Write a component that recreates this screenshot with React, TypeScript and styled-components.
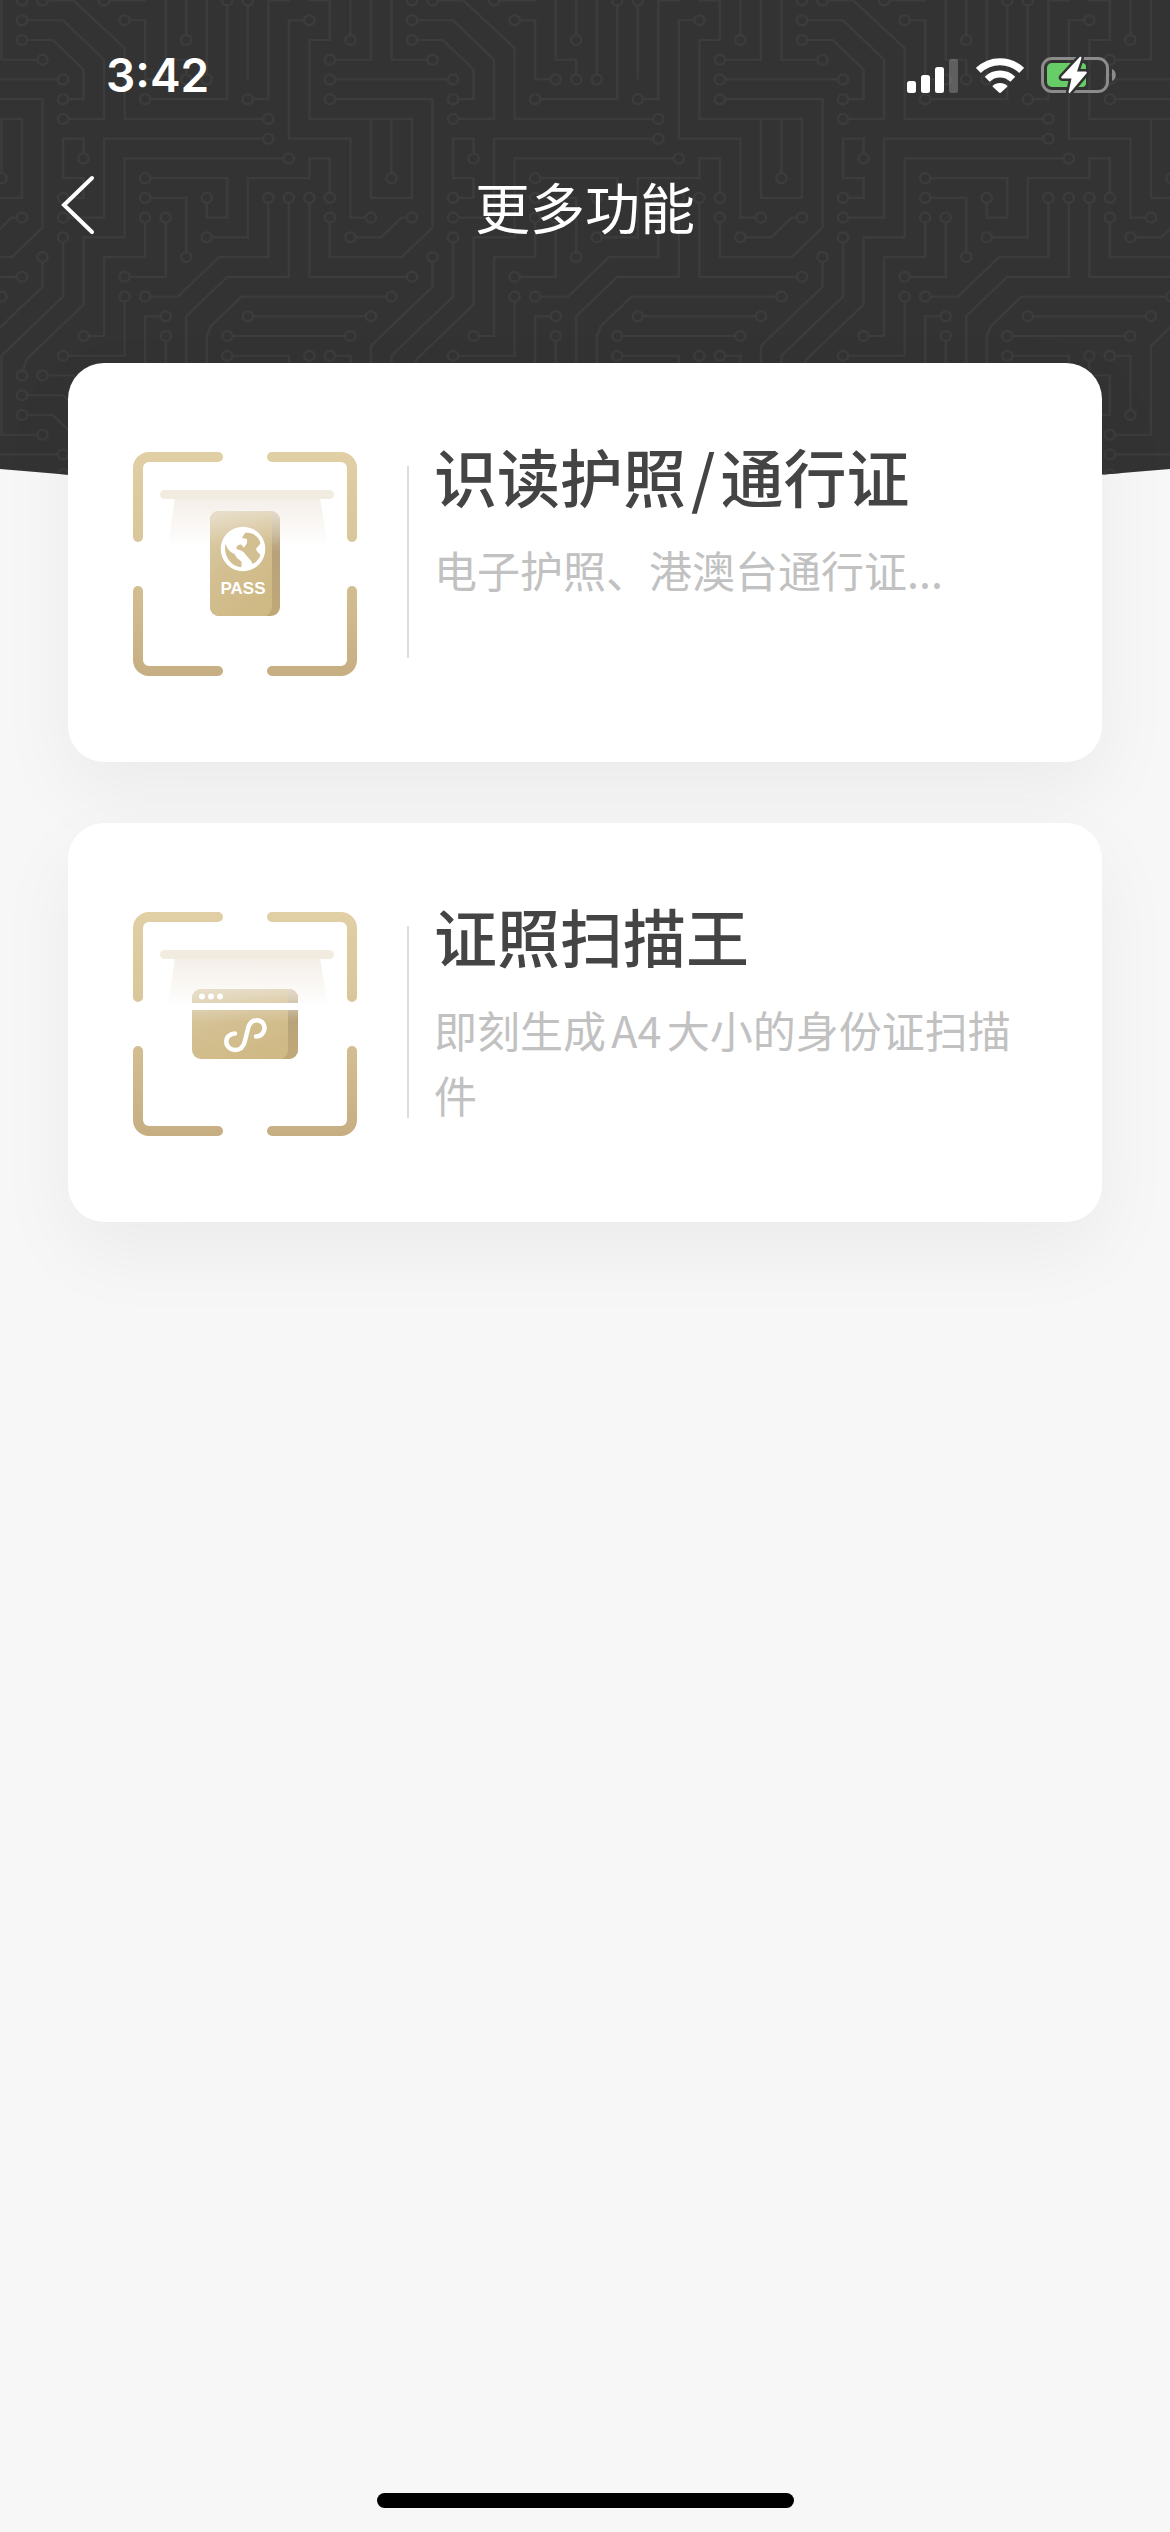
import React from "react";
import styled, { createGlobalStyle } from "styled-components";

const GlobalStyle = createGlobalStyle`
  *, *::before, *::after { box-sizing: border-box; }
  body {
    margin: 0;
    background: #f7f7f7;
    font-family: Inter, "Noto Sans CJK SC", sans-serif;
    -webkit-font-smoothing: antialiased;
  }
  h1, h2, p { margin: 0; }
`;

const Page = styled.div`
  position: relative;
  display: flex;
  flex-direction: column;
  min-height: 100vh;
`;

const Backdrop = styled.div`
  position: absolute;
  inset: 0 0 auto;
  height: 495px;
  background: #333333;
  clip-path: circle(6600px at 50% -6105px);
`;

const BackdropArt = styled.svg`
  display: block;
  width: 100%;
  height: 100%;
`;

const Header = styled.header`
  position: relative;
  color: #ffffff;
`;

const StatusBar = styled.div`
  display: flex;
  align-items: center;
  justify-content: space-between;
  height: 150px;
  padding: 0 54px 0 106px;
`;

const Clock = styled.time`
  font-size: 46px;
  font-weight: 600;
  line-height: 50px;
`;

const StatusIcons = styled.div`
  display: flex;
  align-items: center;
  gap: 17px;

  svg { display: block; }
`;

const NavBar = styled.nav`
  display: grid;
  grid-template-columns: 110px 1fr 110px;
  align-items: center;
  height: 110px;
`;

const BackButton = styled.button`
  display: flex;
  align-items: center;
  justify-content: flex-end;
  height: 110px;
  padding: 0 14px 0 0;
  border: 0;
  background: none;
  color: inherit;
  cursor: pointer;
`;

const NavTitle = styled.h1`
  font-family: "Noto Sans CJK SC", sans-serif;
  font-size: 55px;
  font-weight: 400;
  line-height: 80px;
  text-align: center;
`;

const CardList = styled.main`
  position: relative;
  display: flex;
  flex-direction: column;
  gap: 61px;
  padding: 103px 68px 80px;
`;

const Card = styled.a`
  display: flex;
  align-items: flex-start;
  padding: 72px 65px 86px;
  border-radius: 36px;
  background: #ffffff;
  box-shadow: 0 30px 80px rgba(0, 0, 0, 0.05);
  color: inherit;
  text-decoration: none;
`;

const CardIcon = styled.svg`
  flex: none;
  width: 224px;
  height: 224px;
  margin-top: 17px;
`;

const Divider = styled.span`
  flex: none;
  width: 2px;
  height: 192px;
  margin: 31px 25px 0 50px;
  background: #dcdcdc;
`;

const CardText = styled.div`
  flex: 1;
  min-width: 0;
  font-family: "Noto Sans CJK SC", sans-serif;
`;

const CardTitle = styled.h2`
  color: #444444;
  font-size: 63px;
  font-weight: 500;
  line-height: 80px;
`;

const Slash = styled.span`
  padding: 0 5px;
`;

const CardNote = styled.p`
  margin-top: 22px;
  color: #c1c1c1;
  font-size: 43px;
  font-weight: 400;
  line-height: 65px;
  text-autospace: normal;
`;

const HomeArea = styled.footer`
  display: flex;
  justify-content: center;
  margin-top: auto;
  padding-bottom: 24px;
`;

const HomeIndicator = styled.span`
  width: 417px;
  height: 15px;
  border-radius: 8px;
  background: #000000;
`;

/* Circuit traces on a 19 x 19 grid; the tile repeats in both directions. */
const TRACES = [
  "M1 0H2.5L5 2.4V6H12",
  "M0 1H2L4 3V6H2",
  "M0 2H1.5L3 3.5V5H2",
  "M5 1H6V4H7",
  "M15 4H21",
  "M1 13V14.5L-2 17.5V22H-4",
  "M2 12V15L-1 18V22H1",
  "M13 8H5V12H3V15.4L.2 18.2L0 19",
  "M13 10V14H10L8 16V21",
  "M12 10V13H9.6L7.6 15H6",
  "M14 10V14H19",
  "M15 11V13H18.5L20 11.5V5H15",
  "M18 15H10.7L9.2 16.5L9 17V23",
  "M11 16H17",
  "M10 17H16",
  "M10 18H13V19H12V24H11",
  "M14 18V19H15V21H14V25H19V29H17V25",
  "M15 18H16V21",
  "M6 5H10V0",
  "M11 0V4",
  "M7 17V22H8V23",
  "M7 16H6V19H4",
  "M5 15V18H2",
  "M3 17H4V13H6V11",
  "M5 14H7V11",
  "M8 13V10H6",
  "M6 9H10V11H9V10",
  "M9 12H11V9H14V8H15V10",
  "M12 7H4V11H2",
  "M3 8V7H2V9H3V10H2",
  "M14 1H13V7H16V11H17",
  "M18 9V6",
  "M16 12H17.5L18.5 11H19",
];

const NODES: [number, number][] = [
  [1, 0], [12, 6], [0, 1], [2, 6], [0, 2], [2, 5], [5, 1], [7, 4], [15, 4], [2, 4],
  [1, 13], [15, 3], [2, 12], [1, 3], [13, 8], [0, 0], [13, 10], [8, 2], [12, 10],
  [6, 15], [14, 10], [0, 14], [15, 11], [15, 5], [18, 15], [9, 4], [11, 16],
  [17, 16], [10, 17], [16, 17], [10, 18], [11, 5], [14, 18], [15, 18], [16, 2],
  [6, 5], [10, 0], [11, 0], [7, 17], [8, 4], [7, 16], [4, 0], [5, 15], [2, 18],
  [3, 17], [6, 11], [5, 14], [7, 11], [8, 13], [6, 10], [6, 9], [9, 10], [9, 12],
  [15, 10], [12, 7], [2, 11], [3, 8], [2, 10], [14, 1], [17, 11], [18, 9],
  [16, 12], [0, 11],
];

const SHIFTS = [-1, 0, 1];

function CircuitBackdrop() {
  return (
    <Backdrop aria-hidden="true">
      <BackdropArt>
        <defs>
          <g id="circuit" fill="none" stroke="#3c3c3c" strokeWidth="0.11">
            {TRACES.map((d) => (
              <path key={d} d={d} />
            ))}
            {NODES.map(([c, r]) => (
              <circle key={`${c}-${r}`} cx={c} cy={r} r="0.25" fill="#333333" />
            ))}
          </g>
          <pattern id="board" width="390" height="375" patternUnits="userSpaceOnUse">
            <g transform="translate(22 .5) scale(20.526 19.737)">
              {SHIFTS.flatMap((y) =>
                SHIFTS.map((x) => (
                  <use key={`${x}${y}`} href="#circuit" x={x * 19} y={y * 19} />
                ))
              )}
            </g>
          </pattern>
        </defs>
        <rect width="100%" height="100%" fill="url(#board)" />
      </BackdropArt>
    </Backdrop>
  );
}

function SignalIcon() {
  return (
    <svg width="52" height="36" viewBox="0 0 52 36" fill="#fff" role="img" aria-label="信号">
      <rect x="0" y="24" width="9" height="12" rx="2.5" />
      <rect x="14" y="18" width="9" height="18" rx="2.5" />
      <rect x="28" y="10" width="9" height="26" rx="2.5" />
      <rect x="42" y="2" width="9" height="34" rx="2.5" opacity=".22" />
    </svg>
  );
}

function WifiIcon() {
  return (
    <svg width="48" height="36" viewBox="0 0 48 36" role="img" aria-label="Wi-Fi">
      <g fill="none" stroke="#fff" strokeWidth="7">
        <path d="M2.4 13.4A31 31 0 0 1 45.6 13.4" />
        <path d="M11.2 22.2A18.3 18.3 0 0 1 36.8 22.2" />
      </g>
      <path
        d="M24 26C27 26 29.5 27.2 31 28.5C31.6 29 31.5 29.5 31 30L25 35.6C24.3 36.2 23.7 36.2 23 35.6L17 30C16.5 29.5 16.4 29 17 28.5C18.5 27.2 21 26 24 26Z"
        fill="#fff"
      />
    </svg>
  );
}

function BatteryIcon() {
  return (
    <svg width="75" height="38" viewBox="0 0 75 38" role="img" aria-label="正在充电">
      <rect x="1.5" y="2.5" width="65" height="33" rx="9.5" fill="none" stroke="#8c8c8c" strokeWidth="3" />
      <path d="M71 13C76 15 76 23 71 25Z" fill="#8c8c8c" />
      <path d="M11 7H41A4 4 0 0 1 45 11V27A4 4 0 0 1 41 31H11A5 5 0 0 1 6 26V12A5 5 0 0 1 11 7Z" fill="#67ce67" />
      <path
        d="M38.5 1.2L20.6 20.6C19.8 21.6 20.2 22.5 21.5 22.5H30.5L27.6 35.8C27.4 37.2 28.4 37.6 29.3 36.6L45.4 17.6C46.2 16.5 45.8 15.6 44.6 15.6H36L40.4 2.4C40.7 1 39.5 .2 38.5 1.2Z"
        fill="#fff"
        stroke="#333"
        strokeWidth="5"
        paintOrder="stroke"
      />
    </svg>
  );
}

/* Corner brackets with the light beam, shared by both card drawings. */
function ScanFrame({ id }: { id: string }) {
  return (
    <>
      <defs>
        <linearGradient id={`${id}-frame`} x1="0" y1="0" x2="0" y2="224" gradientUnits="userSpaceOnUse">
          <stop offset="0" stopColor="#e1cfa5" />
          <stop offset=".4" stopColor="#d9c69a" />
          <stop offset="1" stopColor="#c6ae82" />
        </linearGradient>
        <linearGradient id={`${id}-beam`} x1="0" y1="46" x2="0" y2="94" gradientUnits="userSpaceOnUse">
          <stop offset="0" stopColor="#f4eee8" />
          <stop offset="1" stopColor="#ffffff" />
        </linearGradient>
        <linearGradient id={`${id}-face`} x1="0" y1="0" x2=".6" y2="1">
          <stop offset="0" stopColor="#dcceac" />
          <stop offset=".5" stopColor="#d3bf91" />
          <stop offset="1" stopColor="#cfb985" />
        </linearGradient>
        <linearGradient id={`${id}-side`} x1="0" y1="0" x2="0" y2="1">
          <stop offset="0" stopColor="#cfc2a8" />
          <stop offset=".4" stopColor="#b8a27a" />
          <stop offset="1" stopColor="#c0a878" />
        </linearGradient>
        <linearGradient id={`${id}-veil`} x1="0" y1="0" x2="0" y2="1">
          <stop offset="0" stopColor="#f3eee6" stopOpacity=".55" />
          <stop offset="1" stopColor="#f3eee6" stopOpacity="0" />
        </linearGradient>
      </defs>
      <path
        d="M85 5H16A11 11 0 0 0 5 16V85M139 5H208A11 11 0 0 1 219 16V85M5 139V208A11 11 0 0 0 16 219H85M219 139V208A11 11 0 0 1 208 219H139"
        fill="none"
        stroke={`url(#${id}-frame)`}
        strokeWidth="10"
        strokeLinecap="round"
      />
      <path d="M42 46H187L195 94H35Z" fill={`url(#${id}-beam)`} />
      <rect x="27" y="38" width="174" height="9" rx="4.5" fill="#f2ece0" />
    </>
  );
}

function PassportIcon() {
  return (
    <CardIcon viewBox="0 0 224 224" aria-hidden="true">
      <ScanFrame id="pass" />
      <rect x="77" y="59" width="70" height="105" rx="9" fill="url(#pass-side)" />
      <path d="M86 59H133Q139 59 139 67V154Q139 160 133 164H86A9 9 0 0 1 77 155V68A9 9 0 0 1 86 59Z" fill="url(#pass-face)" />
      <rect x="77" y="59" width="70" height="36" rx="9" fill="url(#pass-veil)" />
      <circle cx="110" cy="97" r="22.3" fill="#fff" />
      <g fill="#d3c092">
        <path d="M112 81C120 80 126 85 127.500 91C126 94 124 95 123 97C124 100 126 101 127.500 103C126 108 122 111 119.500 112C118 107 114 105 111.500 101L109 99L103.500 97C103 94 105 92.500 108 92.500C110 93.500 110 95.500 111 95.500L114 91V87L109 86Z" />
        <path d="M92.500 91.500C94 97 97 100 101.500 102L104 106L108.500 109.500V115C99 115 90 105 92.500 91.500Z" />
      </g>
      <text
        x="110"
        y="142"
        textAnchor="middle"
        fill="#fff"
        fontFamily="'Liberation Sans', sans-serif"
        fontSize="17"
        fontWeight="700"
      >
        PASS
      </text>
    </CardIcon>
  );
}

function ScannerIcon() {
  return (
    <CardIcon viewBox="0 0 224 224" aria-hidden="true">
      <ScanFrame id="scan" />
      <rect x="59" y="77" width="106" height="70" rx="9" fill="url(#scan-face)" />
      <path d="M155 77H156A9 9 0 0 1 165 86V138A9 9 0 0 1 156 147H149Q155 144 155 137Z" fill="url(#scan-side)" />
      <rect x="59" y="77" width="106" height="34" rx="9" fill="url(#scan-veil)" />
      <path d="M58 91H166V98H58Z" fill="#fff" />
      <g fill="#fff">
        <circle cx="69" cy="84.500" r="3" />
        <circle cx="78" cy="84.500" r="3" />
        <circle cx="87" cy="84.500" r="3" />
      </g>
      <path
        d="M102 121.500C97 121.500 93.300 125 93.300 129.500C93.300 134.500 97.500 138 102 138C107.500 138 110.500 134.500 111.800 129.500L115 116.500C116.200 111.500 119.500 108.300 124 108.300C128.500 108.300 131.600 112 131.600 116C131.600 120.500 128 124.500 123 124.500"
        fill="none"
        stroke="#fff"
        strokeWidth="4.5"
        strokeLinecap="round"
      />
    </CardIcon>
  );
}

const FEATURES = [
  {
    id: "passport",
    title: (
      <>
        识读护照<Slash>/</Slash>通行证
      </>
    ),
    note: "电子护照、港澳台通行证...",
    Icon: PassportIcon,
  },
  {
    id: "scanner",
    title: "证照扫描王",
    note: "即刻生成A4大小的身份证扫描件",
    Icon: ScannerIcon,
  },
];

export default function App() {
  return (
    <Page>
      <GlobalStyle />
      <CircuitBackdrop />
      <Header>
        <StatusBar>
          <Clock>3:42</Clock>
          <StatusIcons>
            <SignalIcon />
            <WifiIcon />
            <BatteryIcon />
          </StatusIcons>
        </StatusBar>
        <NavBar>
          <BackButton type="button" aria-label="返回">
            <svg width="36" height="60" viewBox="0 0 36 60" fill="none" stroke="#fff" strokeWidth="4" strokeLinecap="round">
              <path d="M32 3L4 30L32 57" />
            </svg>
          </BackButton>
          <NavTitle>更多功能</NavTitle>
        </NavBar>
      </Header>
      <CardList>
        {FEATURES.map(({ id, title, note, Icon }) => (
          <Card key={id} href="#">
            <Icon />
            <Divider />
            <CardText>
              <CardTitle>{title}</CardTitle>
              <CardNote>{note}</CardNote>
            </CardText>
          </Card>
        ))}
      </CardList>
      <HomeArea>
        <HomeIndicator />
      </HomeArea>
    </Page>
  );
}
